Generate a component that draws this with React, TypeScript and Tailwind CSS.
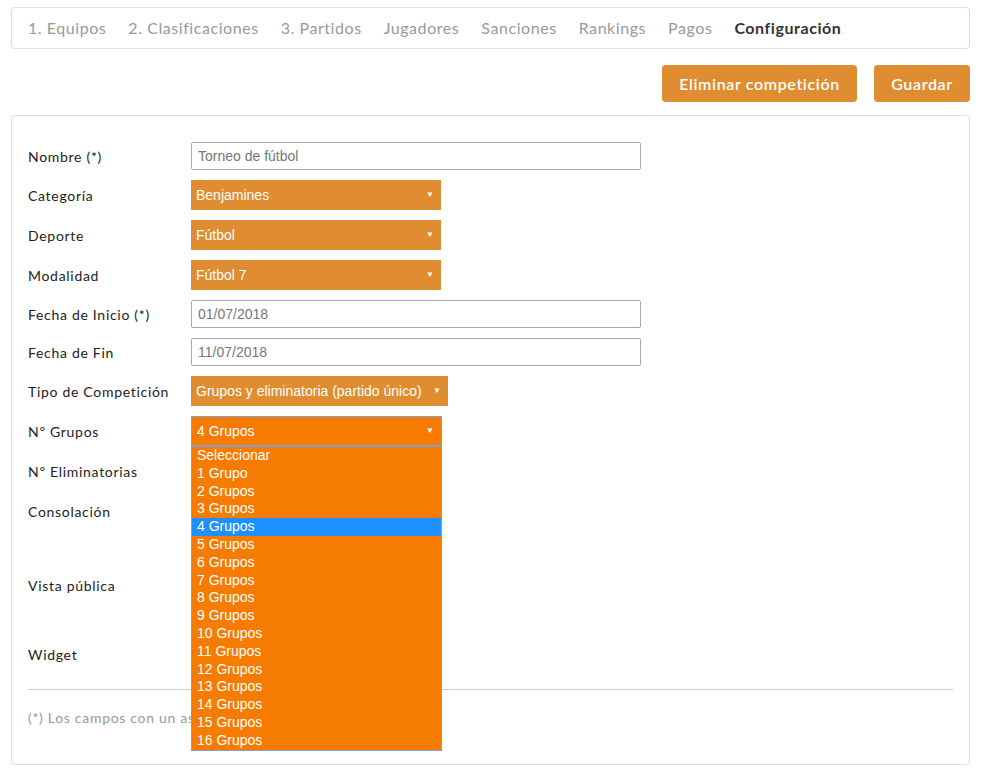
import React from "react";

const tabs = [
  "1. Equipos",
  "2. Clasificaciones",
  "3. Partidos",
  "Jugadores",
  "Sanciones",
  "Rankings",
  "Pagos",
];

const options = [
  "Seleccionar",
  "1 Grupo",
  ...Array.from({ length: 15 }, (_, i) => `${i + 2} Grupos`),
];

function Label({ children }: { children: React.ReactNode }) {
  return <div className="w-[163px] shrink-0 text-[14px] text-[#222] tracking-[0.05em]">{children}</div>;
}

function TextInput({ value }: { value: string }) {
  return (
    <div className="w-[450px] h-[28px] border border-[#a9a9a9] rounded-[2px] flex items-center pl-[6px] text-[14px] text-[#777] bg-white [font-family:'Liberation_Sans',Arial,sans-serif]">
      {value}
    </div>
  );
}

function Select({ value, w = "w-[250px]" }: { value: string; w?: string }) {
  return (
    <div
      className={`${w} h-[30px] bg-[#e08d31] flex items-center justify-between pl-[5px] pr-[7px] text-[14px] text-white [font-family:'Liberation_Sans',Arial,sans-serif]`}
    >
      <span>{value}</span>
      <span className="text-[8px]">▼</span>
    </div>
  );
}

export default function App() {
  return (
    <div className="w-[981px] min-h-[777px] bg-white px-[11px] pt-[7px] [font-family:Lato,'Open_Sans',sans-serif]">
      <div className="h-[42px] border border-[#dddddd] rounded-[4px] flex items-center pl-[16px] gap-[22px] text-[16px] text-[#999] tracking-[0.035em]">
        {tabs.map((t) => (
          <span key={t}>{t}</span>
        ))}
        <span className="font-bold text-[#333]">Configuración</span>
      </div>

      <div className="flex justify-end gap-[17px] mt-[16px]">
        <button className="h-[37px] w-[195px] bg-[#e08d31] text-white text-[16px] font-semibold rounded-[4px] tracking-[0.04em]">
          Eliminar competición
        </button>
        <button className="h-[37px] w-[96px] bg-[#e08d31] text-white text-[16px] font-semibold rounded-[4px] tracking-[0.04em]">
          Guardar
        </button>
      </div>

      <div className="mt-[13px] border border-[#dddddd] rounded-[4px] px-[16px] pt-[26px] pb-[36px]">
        <div className="flex flex-col gap-[10px]">
          <div className="flex items-center h-[28px]">
            <Label>Nombre (*)</Label>
            <TextInput value="Torneo de fútbol" />
          </div>
          <div className="flex items-center h-[30px]">
            <Label>Categoría</Label>
            <Select value="Benjamines" />
          </div>
          <div className="flex items-center h-[30px]">
            <Label>Deporte</Label>
            <Select value="Fútbol" />
          </div>
          <div className="flex items-center h-[30px]">
            <Label>Modalidad</Label>
            <Select value="Fútbol 7" />
          </div>
          <div className="flex items-center h-[28px]">
            <Label>Fecha de Inicio (*)</Label>
            <TextInput value="01/07/2018" />
          </div>
          <div className="flex items-center h-[28px]">
            <Label>Fecha de Fin</Label>
            <TextInput value="11/07/2018" />
          </div>
          <div className="flex items-center h-[30px]">
            <Label>Tipo de Competición</Label>
            <Select value="Grupos y eliminatoria (partido único)" w="w-[257px]" />
          </div>
          <div className="flex items-center h-[30px]">
            <Label>Nº Grupos</Label>
            <div className="relative">
              <div className="w-[251px] h-[30px] bg-[#f57c00] border border-[#7f9fd6] flex items-center justify-between pl-[5px] pr-[7px] text-[14px] text-white [font-family:'Liberation_Sans',Arial,sans-serif]">
                <span>4 Grupos</span>
                <span className="text-[8px]">▼</span>
              </div>
              <div className="absolute left-0 top-[30px] w-[251px] bg-[#f57c00] border border-[#7f9fd6] z-10 text-[14px] text-white [font-family:'Liberation_Sans',Arial,sans-serif]">
                {options.map((o) => (
                  <div
                    key={o}
                    className={`h-[17.8px] leading-[17.8px] pl-[5px] ${o === "4 Grupos" ? "bg-[#1e90ff]" : ""}`}
                  >
                    {o}
                  </div>
                ))}
              </div>
            </div>
          </div>
          <div className="flex items-center h-[30px]">
            <Label>Nº Eliminatorias</Label>
          </div>
          <div className="flex items-center h-[30px]">
            <Label>Consolación</Label>
          </div>
          <div className="flex items-center h-[98px]">
            <Label>Vista pública</Label>
          </div>
          <div className="flex items-center h-[20px]">
            <Label>Widget</Label>
          </div>
        </div>
        <div className="mt-[25px] border-t border-[#cccccc]" />
        <div className="mt-[18px] h-[20px] w-[163px] overflow-hidden whitespace-nowrap leading-[20px] text-[14px] text-[#999] tracking-[0.05em]">
          (*) Los campos con un asterisco son obligatorios
        </div>
      </div>
    </div>
  );
}
